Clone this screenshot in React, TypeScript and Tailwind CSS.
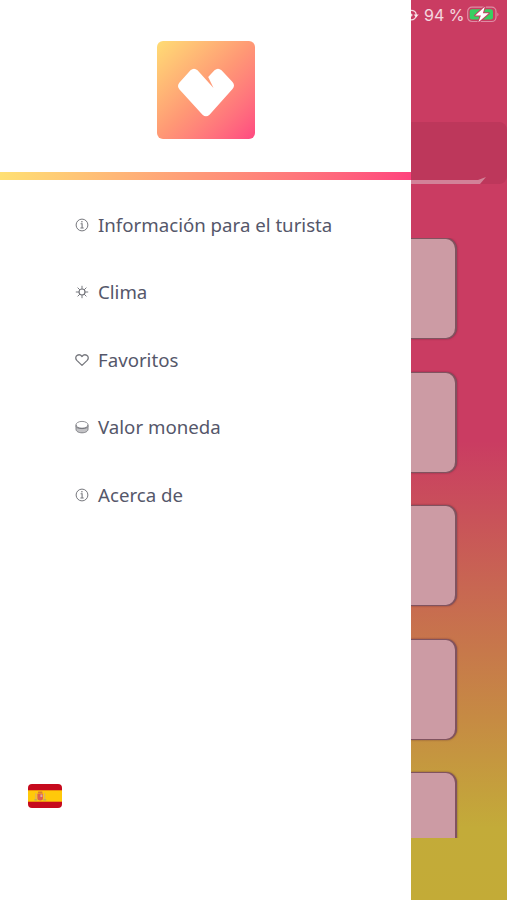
import type { ReactNode } from "react";

function InfoIcon() {
  return (
    <svg viewBox="0 0 14 14" className="h-3.5 w-3.5" fill="none" stroke="currentColor">
      <circle cx="7" cy="7" r="5.9" strokeWidth="1" />
      <path d="M5.6 5.8H7.1V9.9M5.4 10H8.7" strokeWidth="1.1" />
      <circle cx="6.9" cy="3.8" r="0.8" fill="currentColor" stroke="none" />
    </svg>
  );
}

function SunIcon() {
  return (
    <svg viewBox="0 0 14 14" className="h-3.5 w-3.5" fill="none" stroke="currentColor" strokeLinecap="round">
      <circle cx="7" cy="7" r="3" strokeWidth="1.2" />
      <path
        d="M7 1.2V3.8M7 10.2V12.8M1.2 7H3.8M10.2 7H12.8M2.9 2.9L4.7 4.7M9.3 9.3L11.1 11.1M2.9 11.1L4.7 9.3M9.3 4.7L11.1 2.9"
        strokeWidth="1"
      />
    </svg>
  );
}

function HeartIcon() {
  return (
    <svg viewBox="0 0 14 14" className="h-3.5 w-3.5" fill="none" stroke="currentColor" strokeLinejoin="round">
      <path
        d="M7 12.4L1.8 7.4C.3 5.8.4 3.4 2.1 2.4C3.8 1.3 5.8 1.9 7 3.5C8.2 1.9 10.2 1.3 11.9 2.4C13.6 3.4 13.7 5.8 12.2 7.4Z"
        strokeWidth="1.3"
      />
    </svg>
  );
}

function CoinsIcon() {
  return (
    <svg viewBox="0 0 14 14" className="h-3.5 w-3.5" fill="none" stroke="currentColor">
      <path d="M1 6.5C1.5 9.3 12.5 9.3 13 6.5V9.2C13 11.3 10.5 12.8 7 12.8S1 11.3 1 9.2Z" fill="currentColor" fillOpacity="0.45" stroke="none" />
      <ellipse cx="7" cy="4.8" rx="6" ry="3.4" strokeWidth="0.8" />
      <path d="M1 4.8V9.2C1 11.3 3.5 12.8 7 12.8S13 11.3 13 9.2V4.8" strokeWidth="0.9" />
      <path d="M1 6.4C1.5 9.3 12.5 9.3 13 6.4" strokeWidth="1" />
    </svg>
  );
}

function Logo() {
  return (
    <div className="h-[98px] w-[98px] rounded-[6px] bg-linear-to-br from-[#ffdc74] via-[#ff9875] to-[#ff4881]">
      <svg viewBox="0 0 98 98" className="h-full w-full">
        <path
          d="M33.5 29.3Q37 26.3 40.5 29.3L56.5 47L51.2 36L57.5 29.3Q61 26.3 64.5 29.3L75.5 41Q78.5 44.5 75.5 48L52.5 73.7Q49 77 45.5 73.7L22.5 48.5Q19.5 45 22.5 41.5Z"
          fill="#fff"
        />
      </svg>
    </div>
  );
}

function SpainFlag() {
  return (
    <svg viewBox="0 0 34 24" className="h-6 w-[34px] rounded-[4px]">
      <rect width="34" height="24" fill="#c60a1d" />
      <rect y="6.3" width="34" height="11.4" fill="#ffc90a" />
      <g>
        <path d="M7.2 9.2H8.5V15.3H7.2ZM16 9.2H17.3V15.3H16Z" fill="#e2b05f" />
        <path d="M6.3 15.2H9.2V16.6H6.3ZM15.3 15.2H18.2V16.6H15.3Z" fill="#b5a867" />
        <path d="M9.4 9.8H15V14Q15 16.5 12.2 16.5T9.4 14Z" fill="#de5f50" />
        <path d="M9.8 9.6L10.2 7.6H14.2L14.6 9.6Z" fill="#dc7a32" />
        <path d="M12.4 10.4H14.4V13H12.4Z" fill="#d9a9a0" />
      </g>
    </svg>
  );
}

function StatusBar() {
  return (
    <div className="flex h-[30px] items-center text-white/80">
      <svg viewBox="0 0 8 14" className="h-3.5 w-2 shrink-0" fill="none" stroke="currentColor">
        <path d="M0 2.3C3 2.3 5.2 4.2 5.2 7S3 11.8 0 11.8" strokeWidth="1.3" />
        <path d="M2.6 6.4H7.8L5.2 9.6Z" fill="currentColor" stroke="none" />
        <circle cx="0" cy="7" r="1.6" fill="currentColor" stroke="none" />
      </svg>
      <span className="ml-[5px] w-[40px] whitespace-nowrap font-[Inter,sans-serif] text-[16px] leading-5">94 %</span>
      <svg viewBox="0 0 33 18" className="ml-[3px] h-[18px] w-[33px] shrink-0">
        <rect x="0.7" y="1.2" width="28.3" height="14.3" rx="4.2" fill="none" stroke="#de8ca4" strokeWidth="1.2" />
        <rect x="2.7" y="3.2" width="23.3" height="10.3" rx="2.2" fill="#37cf61" />
        <path d="M30.4 6.5Q32.6 8.4 30.4 10.4Z" fill="#de8ca4" />
        <path
          d="M17.8 0.8L8.2 9.6H13.9L11.3 16.3L21.8 7.2H15.9Z"
          fill="#fff"
          stroke="#c83b61"
          strokeWidth="2"
          paintOrder="stroke"
          strokeLinejoin="round"
        />
      </svg>
    </div>
  );
}

const menu: { label: string; icon: ReactNode }[] = [
  { label: "Información para el turista", icon: <InfoIcon /> },
  { label: "Clima", icon: <SunIcon /> },
  { label: "Favoritos", icon: <HeartIcon /> },
  { label: "Valor moneda", icon: <CoinsIcon /> },
  { label: "Acerca de", icon: <InfoIcon /> },
];

const cards = [1, 2, 3, 4, 5];

export default function App() {
  return (
    <div className="flex h-[900px] w-[507px] overflow-hidden bg-white font-['Noto_Sans',sans-serif]">
      <aside className="flex w-[411px] shrink-0 flex-col">
        <div className="flex h-[172px] justify-center pt-[41px]">
          <Logo />
        </div>
        <div className="h-2 w-full bg-linear-to-r from-[#ffe073] via-[#ff9678] to-[#ff427d]" />

        <nav className="mt-[11px] flex flex-col pl-[75px]">
          {menu.map((item) => (
            <a key={item.label} className="flex h-[67.5px] items-center text-[#77787e]">
              {item.icon}
              <span className="ml-[9px] text-[18.67px] leading-6 text-[#55576a]">{item.label}</span>
            </a>
          ))}
        </nav>

        <div className="mt-auto pb-[92px] pl-7">
          <SpainFlag />
        </div>
      </aside>

      <main className="flex w-24 flex-col bg-[linear-gradient(to_bottom,#ca3c62_0%,#ca3c62_49%,#c86652_65%,#c68b43_80%,#c3ab39_92%,#c3ab37_100%)]">
        <StatusBar />
        <div className="mt-[92px] flex h-[62px] items-end rounded-r-lg bg-[#bd375b]">
          {/* bottom edge of the header, tapered at its right end */}
          <div className="h-[7px] w-[75px] bg-[#d28298] [clip-path:polygon(0_3px,67px_3px,75px_0,69px_7px,0_7px)]" />
        </div>

        <div className="mt-[54px] flex h-[600px] flex-col gap-[32.5px] overflow-hidden">
          {cards.map((card) => (
            <div
              key={card}
              className="h-[101px] w-[46px] shrink-0 rounded-r-[11px] border-y border-r-2 border-[#80535f] bg-[#cc9ba4] shadow-[0_0_2px_rgba(70,25,45,0.6)]"
            />
          ))}
        </div>
      </main>
    </div>
  );
}
